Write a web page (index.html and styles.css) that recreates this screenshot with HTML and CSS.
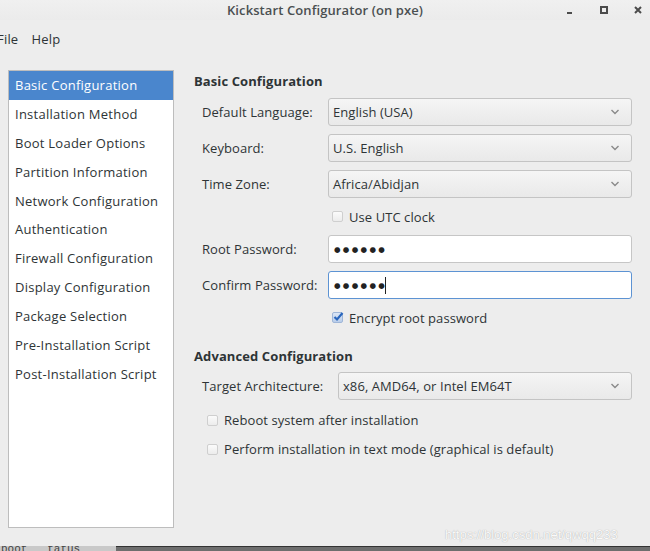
FILE: index.html
```html
<!DOCTYPE html>
<html>
<head>
<meta charset="utf-8">
<link rel="stylesheet" href="styles.css">
</head>
<body>
<div class="window">
  <header class="titlebar">
    <div></div>
    <div class="title">Kickstart Configurator (on pxe)</div>
    <div class="controls">
      <svg width="10" height="10" viewBox="0 0 10 10"><rect x="2" y="7" width="5" height="2" fill="#4b4b4b"/></svg>
      <svg width="10" height="10" viewBox="0 0 10 10"><rect x="2" y="2" width="6" height="6" fill="none" stroke="#4b4b4b" stroke-width="2"/></svg>
      <svg width="10" height="10" viewBox="0 0 10 10"><path d="M2 2 L8 8 M8 2 L2 8" stroke="#4b4b4b" stroke-width="2"/></svg>
    </div>
  </header>
  <nav class="menubar">
    <span class="menu">File</span>
    <span class="menu">Help</span>
  </nav>
  <main class="main">
    <ul class="sidebar">
      <li class="item selected">Basic Configuration</li>
      <li class="item">Installation Method</li>
      <li class="item">Boot Loader Options</li>
      <li class="item">Partition Information</li>
      <li class="item">Network Configuration</li>
      <li class="item">Authentication</li>
      <li class="item">Firewall Configuration</li>
      <li class="item">Display Configuration</li>
      <li class="item">Package Selection</li>
      <li class="item">Pre-Installation Script</li>
      <li class="item">Post-Installation Script</li>
    </ul>
    <section class="pane">
      <h2 class="heading">Basic Configuration</h2>
      <div class="form basic">
        <label class="label">Default Language:</label>
        <div class="combo"><span>English (USA)</span><svg class="arrow" width="10" height="6" viewBox="0 0 10 6"><path d="M1.5 1 L5 4.5 L8.5 1" fill="none" stroke="#8a8a8a" stroke-width="1.4"/></svg></div>
        <label class="label">Keyboard:</label>
        <div class="combo"><span>U.S. English</span><svg class="arrow" width="10" height="6" viewBox="0 0 10 6"><path d="M1.5 1 L5 4.5 L8.5 1" fill="none" stroke="#8a8a8a" stroke-width="1.4"/></svg></div>
        <label class="label">Time Zone:</label>
        <div class="combo"><span>Africa/Abidjan</span><svg class="arrow" width="10" height="6" viewBox="0 0 10 6"><path d="M1.5 1 L5 4.5 L8.5 1" fill="none" stroke="#8a8a8a" stroke-width="1.4"/></svg></div>
        <div></div>
        <div class="check short"><span class="box"></span><span>Use UTC clock</span></div>
        <label class="label">Root Password:</label>
        <div class="entry"><span class="dots">●●●●●●</span></div>
        <label class="label">Confirm Password:</label>
        <div class="entry focused"><span class="dots">●●●●●●</span><span class="caret"></span></div>
        <div></div>
        <div class="check short"><span class="box checked"><svg width="12" height="12" viewBox="0 0 12 12"><path d="M2.5 6 L5 8.5 L10.5 2" fill="none" stroke="#2a66bd" stroke-width="2.2"/></svg></span><span>Encrypt root password</span></div>
      </div>
      <h2 class="heading adv">Advanced Configuration</h2>
      <div class="form advanced">
        <label class="label">Target Architecture:</label>
        <div class="combo"><span>x86, AMD64, or Intel EM64T</span><svg class="arrow" width="10" height="6" viewBox="0 0 10 6"><path d="M1.5 1 L5 4.5 L8.5 1" fill="none" stroke="#8a8a8a" stroke-width="1.4"/></svg></div>
      </div>
      <div class="options">
        <div class="check"><span class="box"></span><span>Reboot system after installation</span></div>
        <div class="check"><span class="box"></span><span>Perform installation in text mode (graphical is default)</span></div>
      </div>
    </section>
  </main>
  <div class="watermark">https://blog.csdn.net/qwqq233</div>
  <footer class="taskbar">
    <span class="task-left">boot&nbsp;&nbsp;&nbsp;tatus</span>
    <span class="task-right"></span>
  </footer>
</div>
</body>
</html>
```
FILE: styles.css
```css
* { box-sizing: border-box; }
html, body { margin: 0; padding: 0; }
body {
  width: 650px;
  height: 551px;
  overflow: hidden;
  background: #ededed;
  font-family: "Open Sans", "Noto Sans", sans-serif;
  font-size: 13px;
  color: #2e3436;
}
.window {
  position: relative;
  width: 650px;
  height: 551px;
  display: flex;
  flex-direction: column;
}
.titlebar {
  height: 20px;
  display: grid;
  grid-template-columns: 1fr auto 1fr;
  align-items: center;
  background: linear-gradient(#f0f0f0, #ebebeb);
}
.title {
  font-weight: 600;
  font-size: 13px;
  letter-spacing: 0.1px;
  color: #4a4f51;
}
.controls {
  display: flex;
  justify-content: flex-end;
  gap: 24px;
  padding-right: 7px;
}
.menubar {
  height: 38px;
  display: flex;
  align-items: center;
  gap: 13px;
  margin-left: -3px;
  letter-spacing: 0.2px;
}
.main {
  display: flex;
  padding-top: 12px;
  padding-left: 8px;
}
.sidebar {
  list-style: none;
  margin: 0;
  padding: 0;
  width: 166px;
  height: 458px;
  background: #fff;
  border: 1px solid #bdbdbd;
  letter-spacing: 0.25px;
}
.item {
  height: 28.9px;
  line-height: 28.9px;
  padding-left: 6px;
  white-space: nowrap;
}
.item.selected {
  background: #4a86cd;
  color: #fff;
}
.pane {
  margin-left: 20px;
  width: 438px;
  letter-spacing: 0.07px;
}
.heading {
  margin: 0;
  font-size: 13px;
  font-weight: 700;
  letter-spacing: 0.1px;
  height: 20px;
  line-height: 20px;
  margin-top: 1px;
}
.form {
  display: grid;
  row-gap: 8px;
  padding-left: 8px;
  align-items: center;
}
.basic {
  grid-template-columns: 126px 304px;
  margin-top: 7px;
}
.advanced {
  grid-template-columns: 136px 294px;
  margin-top: 6px;
}
.heading.adv { margin-top: 18px; }
.combo {
  height: 28px;
  display: flex;
  align-items: center;
  justify-content: space-between;
  padding: 0 11px 0 4px;
  border: 1px solid #c4c4c4;
  border-radius: 3px;
  background: linear-gradient(#f5f5f5, #e9e9e9);
}
.entry {
  height: 28px;
  display: flex;
  align-items: center;
  padding-left: 5px;
  border: 1px solid #c6c6c6;
  border-radius: 3px;
  background: #fff;
}
.entry.focused { border-color: #5d93d3; }
.dots {
  font-family: "DejaVu Sans", sans-serif;
  font-size: 7.5px;
  letter-spacing: 2.3px;
  color: #222;
}
.caret {
  width: 1px;
  height: 17px;
  margin-left: -2px;
  background: #222;
}
.check {
  display: flex;
  align-items: center;
  gap: 6px;
  height: 22px;
}
.check.short { height: 21px; padding-left: 4px; }
.box {
  width: 11px;
  height: 11px;
  border: 1px solid #cfcfcf;
  border-radius: 2px;
  background: linear-gradient(#fbfbfb, #ececec);
  position: relative;
}
.box.checked {
  background: linear-gradient(#dbe6f5, #b9cdea);
  border-color: #9fb6d8;
}
.box.checked svg {
  position: absolute;
  left: -1px;
  top: -2px;
}
.options {
  margin-top: 9px;
  padding-left: 13px;
  display: flex;
  flex-direction: column;
  gap: 7px;
}
.watermark {
  position: absolute;
  left: 445px;
  top: 527px;
  font-family: "Liberation Sans", sans-serif;
  font-size: 13px;
  color: #fafafa;
  text-shadow: 0 0 1px #9c9c9c;
}
.taskbar {
  position: absolute;
  left: 0;
  bottom: 0;
  width: 650px;
  height: 5px;
  display: flex;
  overflow: hidden;
}
.task-left {
  width: 116px;
  background: #c9c9c9;
  font-family: "Liberation Mono", monospace;
  font-size: 11px;
  line-height: 6px;
  color: #444;
  padding-left: 1px;
}
.task-right {
  flex: 1;
  background: #6e6e6e;
  border-top: 1px solid #333;
}
```
